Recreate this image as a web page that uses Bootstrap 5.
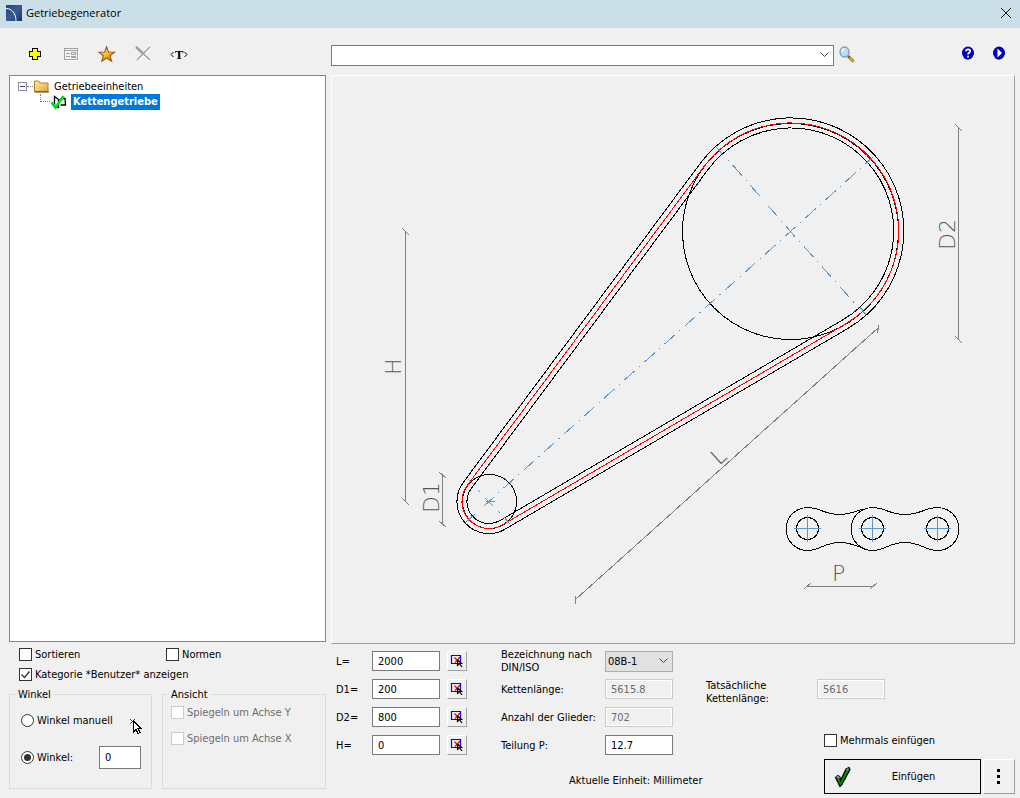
<!DOCTYPE html>
<html lang="de">
<head>
<meta charset="utf-8">
<meta name="viewport" content="width=device-width, initial-scale=1">
<title>Getriebegenerator</title>
<link href="https://cdn.jsdelivr.net/npm/bootstrap@5.3.0/dist/css/bootstrap.min.css" rel="stylesheet">
<style>
  body { background: #f0f0f0; color: #000; font: 11px/13px "DejaVu Sans Condensed", "Noto Sans", sans-serif; }
  svg { display: block; flex: none; overflow: visible; }
  .titlebar { background: #cadfe8; height: 28px; padding: 0 8px 2px 6px; font: 11px/16px "Open Sans", sans-serif; }
  .bare { background: none; border: 0; padding: 0; color: inherit; }
  .window-body { padding: 0 5px 0 9px; gap: 5px; }
  .side { width: 317px; flex: none; }
  .work { min-width: 0; }
  .topbar { height: 47px; }
  .tools { gap: 20px; padding: 5px 0 0 18px; }
  .searchbar { padding: 7px 9px 0 0; }
  .help { margin-left: 105px; }
  .play { margin-left: 17px; }
  .tree { background: #fff; border: 1px solid #828790; padding: 2px 0 0 8px; }
  .tree li { height: 16px; }
  .tree .branch { padding-left: 34px; }
  .picked { background: #0078d7; color: #fff; font-weight: bold; line-height: 16px; padding: 0 2px; }
  .dots { border-top: 1px dotted #808080; width: 6px; }
  .elbow { border-left: 1px dotted #808080; border-bottom: 1px dotted #808080; width: 10px; height: 8px; margin: 0 0 8px -12px; }
  .options { height: 156px; padding-top: 6px; }
  .filters { display: grid; grid-template-columns: 147px auto; row-gap: 7px; padding-left: 10px; margin-bottom: 7px; }
  .form-check-input, .form-check-input:disabled { width: 13px; height: 13px; margin: 0; float: none; flex: none; border: 1px solid #333; background-color: #fff; opacity: 1; box-shadow: none; }
  .form-check-input[type=checkbox] { border-radius: 0; }
  .form-check-input:disabled { border-color: #ccc; }
  .form-check-input:checked { background-color: #fff; border-color: #333; background-size: 100%; }
  .form-check-input:checked[type=checkbox] { background-image: url("data:image/svg+xml,%3csvg xmlns='http://www.w3.org/2000/svg' viewBox='0 0 11 11'%3e%3cpath d='M1.5 5.5l3 3 5-6' fill='none' stroke='%23333' stroke-width='1.3'/%3e%3c/svg%3e"); }
  .form-check-input:checked[type=radio] { background-image: url("data:image/svg+xml,%3csvg xmlns='http://www.w3.org/2000/svg' viewBox='0 0 11 11'%3e%3ccircle cx='5.5' cy='5.5' r='3.5' fill='%23333'/%3e%3c/svg%3e"); }
  .tick { display: flex; align-items: center; gap: 3px; }
  .tick.off { color: #6d6d6d; }
  .groupbox { border: 1px solid #dcdcdc; height: 101px; padding: 0 10px 0 8px; min-width: 0; }
  .groupbox legend { float: none; width: auto; font-size: 11px; line-height: 13px; margin: 0 0 0 -2px; padding: 0 2px; }
  .groups { gap: 10px; }
  .angles { flex: 0 0 143px; }
  .angle-rows { display: grid; row-gap: 19px; padding: 13px 0 0 3px; }
  .view-rows { display: grid; row-gap: 13px; padding-top: 5px; }
  .field { border: 1px solid #7a7a7a; border-radius: 0; background: #fff; color: #000; height: 20px; width: 68px; padding: 0 5px; font-size: 11px; line-height: 13px; }
  .field:disabled { background: #f0f0f0; border-color: #ccc; color: #6d6d6d; box-shadow: inset 0 0 0 1px #fff; }
  .angle-field { width: 42px; height: 23px; }
  select.field { appearance: none; background: #e1e1e1 url("data:image/svg+xml,%3csvg xmlns='http://www.w3.org/2000/svg' width='9' height='6'%3e%3cpath d='M.5 .5l4 4 4-4' fill='none' stroke='%23444'/%3e%3c/svg%3e") no-repeat right 4px center; border-color: #adadad; padding-left: 2px; height: 21px; }
  select.search { background-color: #fff; border-color: #7a7a7a; width: auto; }
  .raised { background: #f0f0f0; border: 1px solid; border-color: #fff #a0a0a0 #a0a0a0 #fff; padding: 0; }
  .canvas-frame { border: 1px solid; border-color: #fff #a0a0a0 #a0a0a0 #fff; min-height: 0; }
  .canvas-frame svg { width: 100%; height: 100%; position: absolute; inset: 0; }
  .form-area { height: 154px; padding: 3px 0 5px 5px; }
  .params { display: grid; grid-template-columns: 36px 68px 20px; grid-auto-rows: 28px; align-items: center; }
  .params .raised { width: 20px; height: 20px; margin-left: 7px; }
  .values { display: grid; grid-template-columns: 104px 68px; grid-auto-rows: 28px; align-items: center; margin-left: 41px; }
  .third { padding-left: 33px; }
  .actual { display: grid; grid-template-columns: 111px 68px; margin-top: 32px; }
  .confirm { width: 191px; gap: 2px; }
  .unit { padding: 8px 0 0 233px; }
  .insert { width: 157px; height: 35px; border: 1px solid #000; background: #f0f0f0; }
  .more { width: 32px; height: 35px; }
  .plot text { font-family: "DejaVu Sans Light", "DejaVu Sans", sans-serif; font-weight: 200; font-size: 22px; fill: #555; }
  .pointer { top: 16px; right: 8px; }
</style>
</head>
<body class="d-flex flex-column min-vh-100">
<header class="titlebar d-flex align-items-center">
  <svg width="16" height="16" viewBox="0 0 16 16"><defs><linearGradient id="sky" x1="0" y1="0" x2="1" y2="1"><stop offset="0" stop-color="#24427c"/><stop offset=".5" stop-color="#3a5a94"/><stop offset="1" stop-color="#1c3260"/></linearGradient></defs><path fill="url(#sky)" d="M0 0h16v16H0z"/><path d="M0 3.500c6 0 10 5 10 12.500" fill="none" stroke="#fff"/></svg>
  <span class="ps-1 ms-0 flex-grow-1">Getriebegenerator</span>
  <button class="bare" type="button" aria-label="Schließen"><svg width="12" height="12" viewBox="0 0 12 12"><path d="M1 1l10 10M11 1L1 11" stroke="#111" fill="none"/></svg></button>
</header>
<main class="window-body d-flex flex-grow-1">
  <div class="side d-flex flex-column">
    <div class="topbar tools d-flex align-items-center">
      <button class="bare" type="button" aria-label="Neu"><svg width="16" height="16" viewBox="0 0 16 16" shape-rendering="crispEdges"><path d="M5 2h6v3h3v6h-3v3H5v-3H2V5h3z" fill="#000"/><path d="M6 3h4v3h3v4h-3v3H6v-3H3V6h3z" fill="#ff0"/></svg></button>
      <button class="bare" type="button" aria-label="Eigenschaften" disabled><svg width="16" height="16" viewBox="0 0 16 16" shape-rendering="crispEdges"><path d="M2 14.500h13.500V3" fill="none" stroke="#fff"/><path d="M1.500 2.500h13v11h-13z" fill="#f4f4f4" stroke="#a0a0a0"/><path d="M2 4.500h12M3 7.500h4M3 10.500h4M8.500 6.500h4v2h-4zM8.500 10.500h4v1h-4z" fill="none" stroke="#a0a0a0"/></svg></button>
      <button class="bare" type="button" aria-label="Favoriten"><svg width="16" height="16" viewBox="1 0 16 16"><defs><linearGradient id="gold" x1="0" y1="0" x2=".6" y2="1"><stop offset="0" stop-color="#fff19b"/><stop offset=".6" stop-color="#f6bd2c"/><stop offset="1" stop-color="#d48612"/></linearGradient></defs><path d="M8.500 .8l2 5.200 6 .2-4.600 3.500 1.700 5.500L8.600 12l-4.800 3.200 1.500-5.500L1 6.200l5.700-.2z" fill="url(#gold)" stroke="#9a5b12" stroke-width="1.100"/></svg></button>
      <button class="bare" type="button" aria-label="Löschen" disabled><svg width="16" height="16" viewBox="0 0 16 16"><path d="M2 3l13 12M15 2L4 14" stroke="#fff" stroke-width="2"/><path d="M1.500 1.500L15 14" stroke="#a0a0a0" stroke-width="1.700"/><path d="M1 1l7 6.500" stroke="#a0a0a0" stroke-width="2.600"/><path d="M15 1L8 8l-6 6" fill="none" stroke="#a0a0a0" stroke-width="1.500"/></svg></button>
      <button class="bare" type="button" aria-label="Text"><svg width="16" height="16" viewBox="1 0 16 16"><path d="M3.500 6L1 8.500 3.500 11M14.500 6L17 8.500 14.500 11" fill="none" stroke="#000"/><text x="9" y="13" text-anchor="middle" font-family="Liberation Serif, serif" font-weight="bold" font-size="13">T</text></svg></button>
    </div>
    <div class="tree flex-grow-1">
      <ul class="list-unstyled m-0">
        <li class="d-flex align-items-center">
          <svg width="9" height="9" viewBox="0 0 9 9" shape-rendering="crispEdges"><path d="M.5 .5h8v8h-8z" fill="#f8f8f8" stroke="#919191"/><path d="M2 4.500h5" stroke="#2a4a8c"/></svg>
          <span class="dots"></span>
          <svg width="17" height="14" viewBox="0 0 17 14"><defs><linearGradient id="manila" x1="0" y1="0" x2="1" y2="1"><stop offset="0" stop-color="#fff0ab"/><stop offset="1" stop-color="#dca83c"/></linearGradient></defs><path d="M1 2.500h5l1.500 1.500H15v1H1z" fill="#d6a640"/><path d="M1.500 12.500V2h4l1.500 2h8v8.500z" fill="url(#manila)" stroke="#b48224"/><path d="M1.500 13h14.500" stroke="#5a4210"/></svg>
          <span class="ms-1">Getriebeeinheiten</span>
        </li>
        <li class="branch d-flex align-items-center">
          <span class="elbow"></span>
          <svg width="17" height="16" viewBox="0 0 17 16"><path d="M4.500 2.500l4 3v8l-4-2zM9.500 6.500l2-2H15l.5 6.500h-5" fill="none" stroke="#000" stroke-width="1.300"/><path d="M1.500 8.500l4 5L13.500 2" fill="none" stroke="#00e01c" stroke-width="2.600"/></svg>
          <span class="picked ms-1">Kettengetriebe</span>
        </li>
      </ul>
    </div>
    <div class="options d-flex flex-column">
      <div class="filters">
        <label class="tick"><input class="form-check-input" type="checkbox">Sortieren</label>
        <label class="tick"><input class="form-check-input" type="checkbox">Normen</label>
        <label class="tick text-nowrap"><input class="form-check-input" type="checkbox" checked>Kategorie *Benutzer* anzeigen</label>
      </div>
      <div class="groups d-flex">
        <fieldset class="groupbox angles position-relative">
          <legend>Winkel</legend>
          <div class="angle-rows">
            <label class="tick"><input class="form-check-input" type="radio" name="winkel">Winkel manuell</label>
            <div class="d-flex align-items-center justify-content-between">
              <label class="tick"><input class="form-check-input" type="radio" name="winkel" checked>Winkel:</label>
              <input class="field angle-field" type="text" value="0" aria-label="Winkelwert">
            </div>
          </div>
          <svg class="pointer position-absolute" width="14" height="18" viewBox="0 0 14 18" shape-rendering="crispEdges"><path d="M1 2l5 5M6 2L1 7" stroke="#a01010"/><path d="M4.500 4v11l2.500-2.500 2 4 2-1-2-4h3z" fill="#fff" stroke="#000"/></svg>
        </fieldset>
        <fieldset class="groupbox flex-grow-1" disabled>
          <legend>Ansicht</legend>
          <div class="view-rows">
            <label class="tick off"><input class="form-check-input" type="checkbox" disabled>Spiegeln um Achse Y</label>
            <label class="tick off"><input class="form-check-input" type="checkbox" disabled>Spiegeln um Achse X</label>
          </div>
        </fieldset>
      </div>
    </div>
  </div>
  <div class="work d-flex flex-column flex-grow-1">
    <div class="topbar searchbar d-flex align-items-center">
      <select class="field search flex-grow-1" aria-label="Suche"><option></option></select>
      <button class="bare ms-1" type="button" aria-label="Suchen"><svg width="18" height="18" viewBox="0 0 18 18"><path d="M10 10l5.500 5.500" stroke="#8a6414" stroke-width="3"/><path d="M11.500 11.500l3.500 3.500" stroke="#f4c64a" stroke-width="1.300"/><ellipse cx="6.500" cy="6" rx="4.500" ry="5" fill="#b8dcf4" stroke="#7f9cba" stroke-width="1.300"/><path d="M4 6c0-2 1-3 2.500-3" stroke="#fff" stroke-width="1.500" fill="none"/></svg></button>
      <button class="bare help mb-1" type="button" aria-label="Hilfe"><svg width="14" height="14" viewBox="0 0 14 14"><ellipse cx="7" cy="7" rx="6" ry="6.500" fill="#00c"/><path d="M3 11.500c3 3 9 1 9-5" stroke="#000060" fill="none"/><path d="M5 5.200C5 2.700 9.200 2.700 9.200 5 9.200 6.800 7 6.600 7 8.500M7 9.800v1.800" fill="none" stroke="#fff" stroke-width="1.700"/></svg></button>
      <button class="bare play mb-1" type="button" aria-label="Abspielen"><svg width="14" height="14" viewBox="0 0 14 14"><ellipse cx="7" cy="7" rx="6" ry="6.500" fill="#00c"/><path d="M3 11.500c3 3 9 1 9-5" stroke="#000060" fill="none"/><path d="M5.500 2.500L10 7l-4.500 4.500z" fill="#fff"/></svg></button>
    </div>
    <div class="canvas-frame flex-grow-1 position-relative">
      <svg class="plot" viewBox="332 76 682 567" fill="none" shape-rendering="crispEdges" role="img" aria-label="Kettengetriebe">
        <g stroke="#000">
          <circle cx="790.500" cy="231.500" r="108"/>
          <circle cx="489.500" cy="501.500" r="27"/>
          <path d="M463.300 482.400L700 163.700A113 113 0 1 1 847.800 328.500L505.200 529.100A32 32 0 0 1 463.300 482.400z"/>
          <path d="M471.300 488.400L708 169.600A103 103 0 1 1 842.700 319.900L500.100 520.500A22 22 0 0 1 471.300 488.400z"/>
        </g>
        <path stroke="red" d="M467.300 485.400L704 166.600A108 108 0 1 1 845.200 324.200L502.600 524.800A27 27 0 0 1 467.300 485.400z"/>
        <g stroke="#5b96cf">
          <path d="M790.500 231.500L873 157" stroke-dasharray="14 6 1 6" stroke-dashoffset="7"/>
          <path d="M790.500 231.500L497 494" stroke-dasharray="14 6 1 6" stroke-dashoffset="7"/>
          <path d="M790.500 231.500L724 155" stroke-dasharray="14 6 1 6" stroke-dashoffset="7"/>
          <path d="M790.500 231.500L859 308" stroke-dasharray="14 6 1 6" stroke-dashoffset="7"/>
          <path d="M716 147l7 8M860 307l6 8M485 498l8 8M484 506l10-9M486 501.500h9M468 479l6 6M478 490l2 2M498 511l2 2M504 517l6 7M465 523l10-9"/>
        </g>
        <g stroke="#000">
          <circle cx="807.500" cy="528.500" r="11"/><circle cx="872.500" cy="528.500" r="11"/><circle cx="937.500" cy="528.500" r="11"/>
          <path d="M862 509.500C853 512 849 514.500 840 514.500 824 514.500 820 507.500 807.500 507.500A21.500 21.500 0 0 0 807.500 550.500C820 550.500 824 542.500 840 542.500 849 542.500 853 545 862 547.500"/>
          <path d="M872.500 507.500A21.500 21.500 0 0 0 872.500 550.500C885 550.500 889 542.500 905 542.500S925 550.500 937.500 550.500A21.500 21.500 0 0 0 937.500 507.500C925 507.500 921 514.500 905 514.500S885 507.500 872.500 507.500z"/>
        </g>
        <path stroke="#5b96cf" d="M794 528.500h27M807.500 515v27M859 528.500h27M872.500 515v27M924 528.500h27M937.500 515v27"/>
        <path stroke="#808080" d="M405.500 231v271M402 228l7 7M402 498l7 7M442.500 475v49M439 472l7 6M439 521l7 6M958.500 127v213M955 124l7 7M955 336l7 7M575.500 604v-8M576 599L878 328M878.500 325v5M877.500 329v4M807 586.500h66M804 589l7-6M870 589l7-6"/>
        <text transform="translate(401 375) rotate(-90)">H</text>
        <text transform="translate(439 513) rotate(-90)">D1</text>
        <text transform="translate(955 250) rotate(-90)">D2</text>
        <text transform="translate(719 466) rotate(-42)">L</text>
        <text x="832" y="581">P</text>
      </svg>
    </div>
    <form class="form-area d-flex flex-column justify-content-between" onsubmit="return false">
      <div class="d-flex">
        <div class="params">
          <label for="len">L=</label><input class="field" id="len" value="2000"><button class="raised" type="button" aria-label="L wählen"><svg width="18" height="18" viewBox="0 0 18 18"><use href="#pick"/></svg></button>
          <label for="d1">D1=</label><input class="field" id="d1" value="200"><button class="raised" type="button" aria-label="D1 wählen"><svg width="18" height="18" viewBox="0 0 18 18"><use href="#pick"/></svg></button>
          <label for="d2">D2=</label><input class="field" id="d2" value="800"><button class="raised" type="button" aria-label="D2 wählen"><svg width="18" height="18" viewBox="0 0 18 18"><use href="#pick"/></svg></button>
          <label for="hh">H=</label><input class="field" id="hh" value="0"><button class="raised" type="button" aria-label="H wählen"><svg width="18" height="18" viewBox="0 0 18 18"><use href="#pick"/></svg></button>
        </div>
        <div class="values">
          <label for="norm">Bezeichnung nach DIN/ISO</label><select class="field" id="norm"><option>08B-1</option></select>
          <label for="kl">Kettenlänge:</label><input class="field" id="kl" value="5615.8" disabled>
          <label for="ag">Anzahl der Glieder:</label><input class="field" id="ag" value="702" disabled>
          <label for="tp">Teilung P:</label><input class="field" id="tp" value="12.7">
        </div>
        <div class="third flex-grow-1 d-flex flex-column justify-content-between">
          <div class="actual"><label for="tk">Tatsächliche Kettenlänge:</label><input class="field" id="tk" value="5616" disabled></div>
          <div class="confirm align-self-end pb-2 mb-1"><label class="tick"><input class="form-check-input" type="checkbox">Mehrmals einfügen</label></div>
        </div>
      </div>
      <div class="d-flex align-items-center">
        <span class="unit flex-grow-1">Aktuelle Einheit: Millimeter</span>
        <div class="confirm d-flex">
          <button class="insert d-flex align-items-center ps-2" type="submit"><svg width="20" height="22" viewBox="0 0 20 22"><path d="M2.500 11.500l2.500-2 2 1.500.5 3.500L13 3l3-1.500 1 2L9 18.500l-2 2z" fill="#008a00" stroke="#000" stroke-width="1.200"/><path d="M3.500 11.500l1.500-1 1.500 1.500M13.500 4l2-1.500" stroke="#999" stroke-width="1.500" fill="none"/></svg><span class="flex-grow-1">Einfügen</span></button>
          <button class="raised more" type="button" aria-label="Mehr"><svg class="mx-auto" width="4" height="16" viewBox="0 0 4 16" shape-rendering="crispEdges"><path d="M0 0h3v3H0zM0 6h3v3H0zM0 12h3v3H0z"/></svg></button>
        </div>
      </div>
    </form>
  </div>
</main>
<svg width="0" height="0" class="position-absolute"><defs><g id="pick"><path d="M3.500 3.500h9v8h-9z" fill="none" stroke="#00f" stroke-width="1.200"/><path d="M6.500 5.500l4 4.500M12 5l-5 5.500" stroke="#f00" stroke-width="1.200"/><path d="M9.500 8v5.500l1.500-1M9.500 8l4 3.500h-2l2.500 3.500" fill="none" stroke="#000" stroke-width="1.200"/></g></defs></svg>
<script src="https://cdn.jsdelivr.net/npm/bootstrap@5.3.0/dist/js/bootstrap.bundle.min.js"></script>
</body>
</html>
